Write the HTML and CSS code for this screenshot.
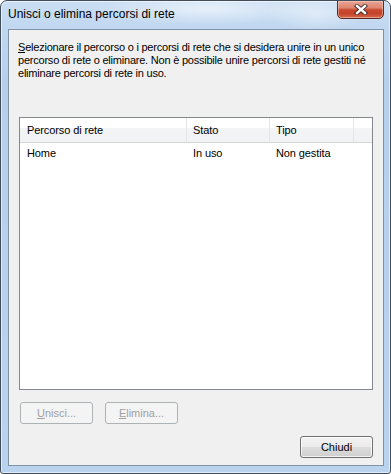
FILE: index.html
```html
<!DOCTYPE html>
<html lang="it">
<head>
    <meta charset="UTF-8">
    <title>Unisci o elimina percorsi di rete</title>
    <link rel="stylesheet" href="styles.css">
</head>
<body>
    <div class="window">
        <div class="titlebar">
            <span class="title">Unisci o elimina percorsi di rete</span>
            <button class="close" title="Chiudi">
                <svg width="14" height="11" viewBox="0 0 14 11">
                    <path d="M3 2 L11 9 M11 2 L3 9" stroke="#3b2a26" stroke-width="4.2" stroke-linecap="square"/>
                    <path d="M3 2 L11 9 M11 2 L3 9" stroke="#ffffff" stroke-width="2.4" stroke-linecap="square"/>
                </svg>
            </button>
        </div>
        <div class="client">
            <p class="intro"><u>S</u>elezionare il percorso o i percorsi di rete che si desidera unire in un unico<br>percorso di rete o eliminare. Non è possibile unire percorsi di rete gestiti né<br>eliminare percorsi di rete in uso.</p>
            <div class="listview">
                <div class="lv-header">
                    <div class="col c1">Percorso di rete</div>
                    <div class="col c2">Stato</div>
                    <div class="col c3">Tipo</div>
                    <div class="col filler"></div>
                </div>
                <div class="lv-row">
                    <div class="cell c1">Home</div>
                    <div class="cell c2">In uso</div>
                    <div class="cell c3">Non gestita</div>
                </div>
            </div>
            <div class="actions">
                <button class="btn" disabled><u>U</u>nisci...</button>
                <button class="btn" disabled><u>E</u>limina...</button>
            </div>
            <div class="footer">
                <button class="btn">Chiudi</button>
            </div>
        </div>
    </div>
</body>
</html>
```

FILE: styles.css
```css
body {
    margin: 0;
    font-family: "Liberation Sans", Arial, sans-serif;
    font-size: 11px;
    color: #000;
    background: #fff;
}

.window {
    width: 391px;
    height: 474px;
    box-sizing: border-box;
    border: 1px solid #414d5a;
    border-radius: 7px 7px 3px 3px;
    display: flex;
    flex-direction: column;
    overflow: hidden;
    box-shadow: inset 0 0 0 1px rgba(255,255,255,0.55);
    background:
        radial-gradient(ellipse 110px 16px at 205px 8px, rgba(255,255,255,0.55), rgba(255,255,255,0)),
        radial-gradient(ellipse 50px 18px at 315px 12px, rgba(255,255,255,0.45), rgba(255,255,255,0)),
        linear-gradient(to bottom, #cbdff3 0, #c0d7f0 28px, #b6d0ec 80px, #b9d3ee 100%);
}

.titlebar {
    height: 28px;
    flex: none;
    display: flex;
    justify-content: space-between;
    align-items: flex-start;
    padding: 0 6px 0 7px;
}

.title {
    font-size: 12px;
    line-height: 15px;
    margin-top: 6px;
    color: #000;
}

.close {
    width: 47px;
    height: 19px;
    margin: -1px 0 0;
    padding: 0;
    border: 1px solid #5a2b22;
    border-radius: 0 0 5px 5px;
    display: flex;
    align-items: center;
    justify-content: center;
    background: linear-gradient(to bottom, #e8a494 0, #de8671 40%, #c84a2f 52%, #c5432a 75%, #d66d51 100%);
    box-shadow: inset 0 0 0 1px rgba(255,220,210,0.45);
}

.client {
    flex: 1;
    margin: 0 6px 7px 7px;
    border: 1px solid #8292a6;
    background: #f0f0f0;
    display: flex;
    flex-direction: column;
    padding: 0 10px 7px;
}

.intro {
    margin: 0 0 0 -1px;
    height: 87px;
    box-sizing: border-box;
    padding-top: 11px;
    line-height: 13px;
    letter-spacing: -0.22px;
    white-space: nowrap;
}

.listview {
    height: 273px;
    box-sizing: border-box;
    border: 1px solid #828790;
    background: #fff;
    flex: none;
    letter-spacing: -0.1px;
}

.lv-header {
    display: flex;
    height: 25px;
    box-sizing: border-box;
    border-bottom: 1px solid #d5d5d5;
    background: linear-gradient(to bottom, #ffffff 0, #ffffff 40%, #f3f4f6 40%, #f1f2f4 100%);
}

.col {
    line-height: 24px;
    box-sizing: border-box;
    border-right: 1px solid #e3e6ea;
}

.c1 { width: 167px; padding-left: 7px; }
.c2 { width: 83px; padding-left: 6px; }
.c3 { width: 84px; padding-left: 6px; }
.filler { flex: 1; border-right: none; }

.lv-row {
    display: flex;
    height: 20px;
    line-height: 20px;
}

.cell {
    box-sizing: border-box;
}

.actions {
    display: flex;
    gap: 12px;
    margin: 12px 0 0 1px;
}

.footer {
    display: flex;
    justify-content: flex-end;
    margin-top: 12px;
}

.btn {
    width: 73px;
    height: 22px;
    padding: 0;
    box-sizing: border-box;
    border: 1px solid #707070;
    border-radius: 3px;
    font-family: "Liberation Sans", Arial, sans-serif;
    font-size: 11px;
    color: #000;
    background: linear-gradient(to bottom, #f2f2f2 0, #ebebeb 50%, #dddddd 50%, #cfcfcf 100%);
    box-shadow: inset 0 0 0 1px rgba(255,255,255,0.75);
}

.btn:disabled {
    border-color: #adb2b5;
    background: #f4f4f4;
    color: #a0a0a0;
    box-shadow: none;
}
```
